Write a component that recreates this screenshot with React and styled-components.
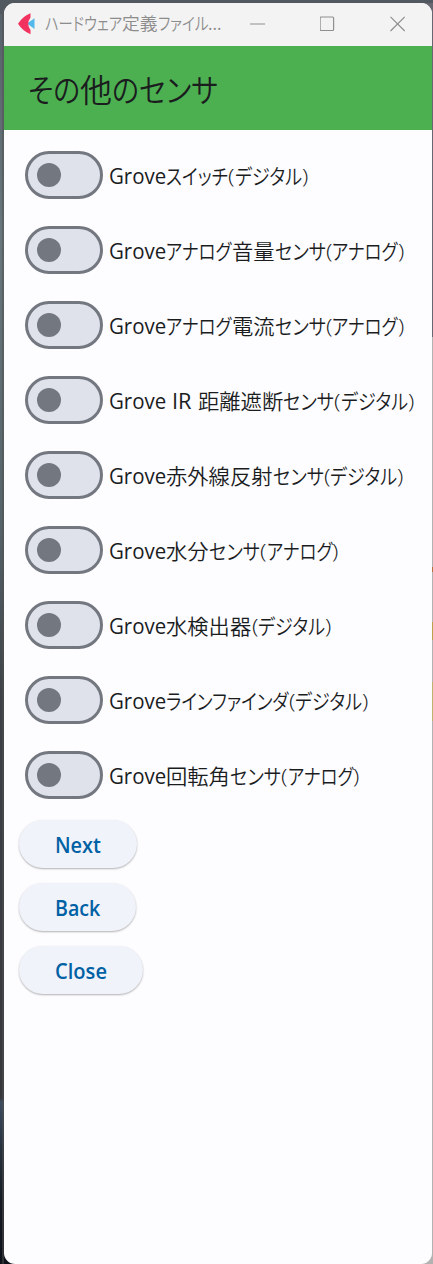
import React, { useLayoutEffect, useRef, useState } from "react";
import styled, { createGlobalStyle } from "styled-components";

const GlobalStyle = createGlobalStyle`
  *, *::before, *::after { box-sizing: border-box; }
  html, body { margin: 0; padding: 0; }
  body { font-family: "Open Sans", "Noto Sans CJK JP", sans-serif; overflow: hidden; }
`;

const Desktop = styled.div`
  width: 433px;
  height: 1264px;
  padding: 3px 1px 0 4px;
  background:
    linear-gradient(to bottom, #666771 0 334px, #b2b2b2 334px 564px, #b8703e 564px 569px, #b2b2b2 569px 619px, #bba14c 619px 637px, #b2b2b2 637px 679px, #bdb26e 679px 718px, #b2b2b2 718px) right 3px / 12px 100% no-repeat,
    linear-gradient(#515860, #515860) top / 100% 14px no-repeat,
    linear-gradient(#50505080, #50505080) 2px 0 / 2px 100% no-repeat,
    linear-gradient(to bottom, #56616a 0, #68777c 230px, #56646a 520px, #3c4147 700px, #36373d 1098px, #3c4c61 1102px, #25303d 1150px, #171c24 1200px, #0c1018 1264px);
`;

const Window = styled.main`
  display: flex;
  flex-direction: column;
  height: 1261px;
  overflow: hidden;
  border-radius: 11px;
  background: #fdfcff;
`;

const TitleBar = styled.header`
  display: flex;
  align-items: center;
  flex: none;
  height: 43px;
  padding: 0 26px 2px 14px;
  background: #f3f3f3;
  color: #8c8c8c;
`;

const Logo = styled.svg`
  width: 17px;
  height: 22px;
  margin-right: 10px;
`;

const Caption = styled.div`
  flex: 1;
  padding-bottom: 2px;
  font-size: 17.5px;
  line-height: 24px;
`;

const WindowControls = styled.div`
  display: flex;
  gap: 54px;
`;

const ControlIcon = styled.svg`
  width: 16px;
  height: 16px;
  fill: none;
  stroke: #8f8f8f;
  stroke-width: 1.2;
`;

const AppBar = styled.div`
  display: flex;
  align-items: center;
  flex: none;
  height: 84px;
  padding: 3px 0 0 24px;
  background: #4caf50;
  color: #1a1c1e;
`;

const Title = styled.h1`
  margin: 0;
  font-size: 32px;
  font-weight: 400;
  line-height: 44px;
`;

const Content = styled.div`
  display: flex;
  flex-direction: column;
  align-items: flex-start;
  gap: 15px;
  padding: 15px 0 0 15px;
`;

const SwitchRow = styled.label`
  display: flex;
  align-items: center;
  height: 60px;
  padding-left: 6px;
  color: #1a1c1e;
`;

const Track = styled.span`
  display: flex;
  align-items: center;
  width: 78px;
  height: 48px;
  padding-left: 9px;
  border: 3px solid #73777f;
  border-radius: 24px;
  background: #dfe2eb;
`;

const Thumb = styled.span`
  width: 24px;
  height: 24px;
  border-radius: 50%;
  background: #73777f;
`;

const Label = styled.span`
  margin: 2px 0 0 6.3px;
  font-size: 21px;
  line-height: 30px;
`;

const ActionButton = styled.button`
  height: 48px;
  padding: 1px 36px 0;
  border: 0;
  border-radius: 24px;
  background: #f0f3fa;
  box-shadow: 0 1px 2px rgba(0, 0, 0, 0.3);
  color: #0061a4;
  font: 600 21px/30px "Open Sans", sans-serif;
`;

const Line = styled.span`
  display: flex;
  white-space: pre;
`;

const Slot = styled.span`
  display: block;
  flex: none;
  width: ${(p) => p.$width}px;
`;

const Glyphs = styled.span`
  display: inline-block;
  transform-origin: 0 50%;
  font-feature-settings: "palt" ${(p) => (p.$kana ? 1 : 0)};
  font-weight: ${(p) => p.$weight};
`;

const KANA = /[\u3040-\u30ff]/;
const PAREN = /^[()]$/;
const LATIN = /^[\x00-\x7f]+$/;

function weightOf(text) {
  if (PAREN.test(text)) return 340;
  return LATIN.test(text) ? 370 : 350;
}

/* A stretch of one script, condensed or widened to its advance width. */
function Run({ text, width, weight }) {
  const ref = useRef(null);
  const [scale, setScale] = useState(1);
  useLayoutEffect(() => {
    const fit = () => setScale(width / parseFloat(getComputedStyle(ref.current).width));
    fit();
    document.fonts.ready.then(fit);
  }, [text, width]);
  return (
    <Slot $width={width}>
      <Glyphs
        ref={ref}
        $kana={KANA.test(text)}
        $weight={weight || weightOf(text)}
        style={{ transform: `scaleX(${scale})` }}
      >
        {text}
      </Glyphs>
    </Slot>
  );
}

function Runs({ parts, weight }) {
  return (
    <Line>
      {parts.map(([text, width], i) => (
        <Run key={i} text={text} width={width} weight={weight} />
      ))}
    </Line>
  );
}

const GROVE = ["Grove", 57.2];
const SENSOR = ["センサ", 51];
const ANALOG_WORD = ["アナログ", 65.5];
const OPEN = ["(", 6.5];
const CLOSE = [")", 6.3];
const ANALOG = [OPEN, ANALOG_WORD, CLOSE];
const DIGITAL = [OPEN, ["デジタル", 67], CLOSE];
const kanji = (text) => [text, text.length * 21.3];

const SENSORS = [
  [GROVE, ["スイッチ", 62], ...DIGITAL],
  [GROVE, ANALOG_WORD, kanji("音量"), SENSOR, ...ANALOG],
  [GROVE, ANALOG_WORD, kanji("電流"), SENSOR, ...ANALOG],
  [GROVE, [" ", 5.5], ["IR", 19.5], [" ", 6.5], kanji("距離遮断"), SENSOR, ...DIGITAL],
  [GROVE, kanji("赤外線反射"), SENSOR, ...DIGITAL],
  [GROVE, kanji("水分"), SENSOR, ...ANALOG],
  [GROVE, kanji("水検出器"), ...DIGITAL],
  [GROVE, ["ラインファインダ", 122.5], ...DIGITAL],
  [GROVE, kanji("回転角"), SENSOR, ...ANALOG],
];

const CAPTION = [["ハードウェア", 77], ["定義", 35.5], ["ファイル", 50.5], ["...", 13.5]];
const TITLE = [["その", 52], ["他", 32], ["の", 27], ["センサ", 79]];
const ACTIONS = [["Next", 46], ["Back", 45.3], ["Close", 52]];

export default function App() {
  return (
    <>
      <GlobalStyle />
      <Desktop>
        <Window>
          <TitleBar>
            <Logo viewBox="0 0 17 22">
              <path d="M9 10.5 16.5 5.2V16Z" fill="#52b9ea" />
              <path d="M12.5 0.3V4.5Q8 10.7 12.5 17V21.2Q5 18.5 0 10.8 5 3 12.5 0.3Z" fill="#f2335f" />
            </Logo>
            <Caption><Runs parts={CAPTION} /></Caption>
            <WindowControls>
              <ControlIcon viewBox="0 0 16 16"><path d="M0 8H15" /></ControlIcon>
              <ControlIcon viewBox="0 0 16 16"><rect x="-0.5" y="1" width="13.5" height="13.5" rx="1" overflow="visible" transform="translate(0.6 0)" /></ControlIcon>
              <ControlIcon viewBox="0 0 16 16"><path d="M0.5 0.8 14.7 15M14.7 0.8 0.5 15" /></ControlIcon>
            </WindowControls>
          </TitleBar>
          <AppBar>
            <Title><Runs parts={TITLE} /></Title>
          </AppBar>
          <Content>
            {SENSORS.map((parts, i) => (
              <SwitchRow key={i}>
                <Track><Thumb /></Track>
                <Label><Runs parts={parts} /></Label>
              </SwitchRow>
            ))}
            {ACTIONS.map((part) => (
              <ActionButton key={part[0]}><Runs parts={[part]} weight={600} /></ActionButton>
            ))}
          </Content>
        </Window>
      </Desktop>
    </>
  );
}
